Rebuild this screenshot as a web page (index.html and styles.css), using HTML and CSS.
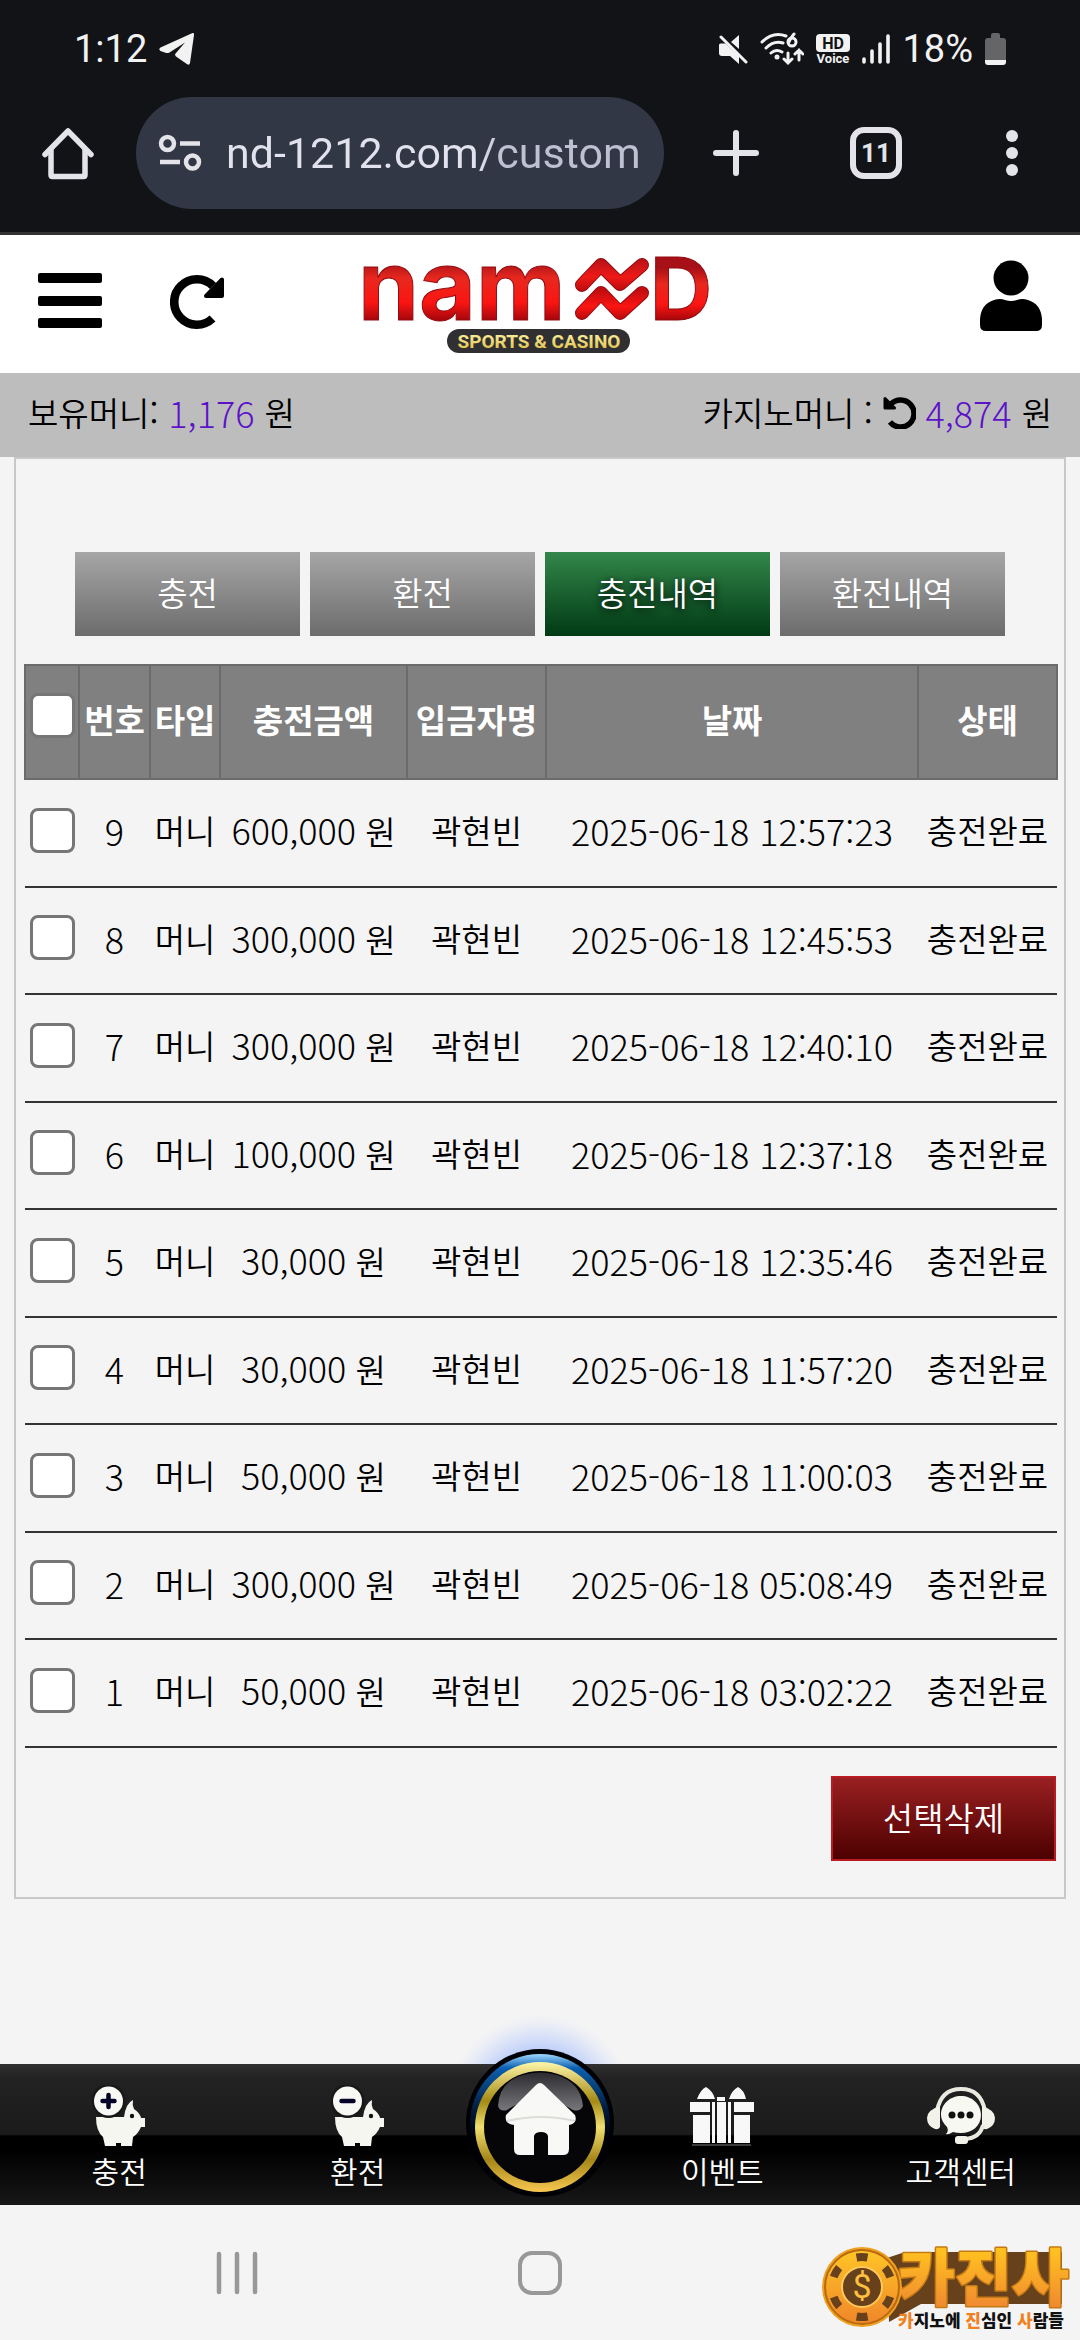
FILE: index.html
```html
<!DOCTYPE html>
<html lang="ko">
<head>
  <meta charset="UTF-8">
  <title>충전내역</title>
  <meta name="viewport" content="width=device-width, initial-scale=1.0">
  <link rel="stylesheet" href="styles.css">
</head>
<body>
  <div class="browser">
    <div class="status-bar">
      <span class="clock">1:12</span>
      <svg width="36" height="34" viewBox="0 0 36 34" fill="#f2f2f2"><path d="M1.500 15.500 33 1.200q2.500-.8 2 1.800L31 31q-.6 2.500-2.800 1.200L17 24.500q-1.800-1.500-.2-3.200L26 10.500 10.500 20.500q-2 1-4 .3L1.500 19q-2.500-1.700 0-3.500z"/></svg>
      <div class="status-icons">
        <svg width="30" height="30" viewBox="0 0 30 30" fill="#f2f2f2"><path d="M13 8 21 1v14zM1 11q0-1.500 1.500-1.500h5L21 22v8l-9-8H4q-3 0-3-3z"/><path d="M3 3l25 25" stroke="#f2f2f2" stroke-width="3" stroke-linecap="round"/></svg>
        <svg width="44" height="34" viewBox="0 0 44 34" fill="none" stroke="#f2f2f2" stroke-width="3" stroke-linecap="round"><path d="M2 10Q13-1 26 4M6 16q8-8 17-5M11 21q5-4.500 11-1"/><circle cx="17" cy="25" r="1" fill="#f2f2f2"/><path d="M34 2q-4 5-5 8"/><circle cx="32" cy="10" r="4"/><path d="M28 21v10m-4-4 4 4 4-4M39 28V18m-4 4 4-4 4 4"/></svg>
        <svg width="34" height="32" viewBox="0 0 34 32" fill="#f2f2f2"><rect x="0" y="1" width="34" height="18" rx="4"/><text class="hd" x="17" y="16" text-anchor="middle">HD</text><text class="voice" x="17" y="30" text-anchor="middle">Voice</text></svg>
        <svg width="28" height="30" viewBox="0 0 28 30" stroke="#f2f2f2" stroke-width="3.600" stroke-linecap="round"><path d="M2 25v3M10 17v11M18 10v18M26 2v26"/></svg>
        <span class="clock">18%</span>
        <svg width="21" height="32" viewBox="0 0 21 32"><path d="M6 5V2q0-2 2-2h5q2 0 2 2v3h3q3 0 3 3v19H0V8q0-3 3-3z" fill="#656567"/><path d="M0 27h21v2q0 3-3 3H3q-3 0-3-3z" fill="#f2f2f2"/></svg>
      </div>
    </div>
    <div class="address-row">
      <button class="tool tool-home" aria-label="홈">
        <svg width="52" height="54" viewBox="0 0 52 54" fill="none" stroke="#e4e3ea" stroke-width="5.500" stroke-linejoin="round" stroke-linecap="round"><path d="M3 28.500 26 5l23 23.500"/><path d="M9 24v25q0 1.500 1.500 1.500h31q1.500 0 1.500-1.500V24"/></svg>
      </button>
      <label class="url-box">
        <svg width="44" height="38" viewBox="0 0 44 38" fill="none" stroke="#e4e3ea" stroke-width="4.500"><circle cx="9.500" cy="9.500" r="6.500"/><path d="M22 9.500h20M2 28h20"/><circle cx="34.500" cy="28" r="6.500"/></svg>
        <input class="url" type="text" value="nd-1212.com/custom" aria-label="주소">
      </label>
      <button class="tool tool-new" aria-label="새 탭">
        <svg width="46" height="48" viewBox="0 0 46 48" stroke="#e4e3ea" stroke-width="6" stroke-linecap="round"><path d="M23 4v40M3 24h40"/></svg>
      </button>
      <button class="tool" aria-label="탭 11개"><span class="tab-count">11</span></button>
      <button class="tool" aria-label="메뉴">
        <svg width="12" height="48" viewBox="0 0 12 48" fill="#e4e3ea"><circle cx="6" cy="7" r="6"/><circle cx="6" cy="24" r="6"/><circle cx="6" cy="41" r="6"/></svg>
      </button>
    </div>
  </div>

  <header class="site-header">
    <div class="header-left">
      <button class="icon-btn" aria-label="전체 메뉴">
        <svg width="64" height="64" viewBox="0 0 64 64"><rect x="0" y="1" width="64" height="10" rx="2"/><rect x="0" y="24" width="64" height="10" rx="2"/><rect x="0" y="46" width="64" height="10" rx="2"/></svg>
      </button>
      <button class="icon-btn" aria-label="새로고침">
        <svg width="56" height="58" viewBox="0 0 56 58"><path d="M43 11A22.700 22.700 0 1 0 42.500 43.500" fill="none" stroke="#000" stroke-width="8.600"/><path d="M52 4.500V21H36z" stroke="#000" stroke-width="4" stroke-linejoin="round"/></svg>
      </button>
    </div>
    <a class="logo" href="#" aria-label="NAMND">
      <svg width="354" height="138" viewBox="0 -22 354 138">
        <defs>
          <linearGradient id="red" x1="0" y1="0" x2="0" y2="1">
            <stop offset=".3" stop-color="#a81018"/>
            <stop offset=".45" stop-color="#e8281e"/>
            <stop offset=".65" stop-color="#fb1512"/>
            <stop offset=".8" stop-color="#a5060c"/>
          </linearGradient>
          <linearGradient id="zig" gradientUnits="userSpaceOnUse" x1="0" y1="0" x2="0" y2="66">
            <stop offset="0" stop-color="#b01018"/>
            <stop offset=".3" stop-color="#ee1a16"/>
            <stop offset=".5" stop-color="#c00c10"/>
            <stop offset=".75" stop-color="#fb1512"/>
            <stop offset="1" stop-color="#a5060c"/>
          </linearGradient>
          <linearGradient id="gold" x1="0" y1="0" x2="0" y2="1">
            <stop offset="0" stop-color="#fff8b0"/>
            <stop offset="1" stop-color="#dcb93c"/>
          </linearGradient>
        </defs>
        <text class="logo-small" x="-5" y="63">nam</text>
        <g fill="none" stroke-linejoin="round" stroke-linecap="round">
          <g stroke="#8f0b10" stroke-width="14"><path d="M219 28 238 8l19 19 22-19"/><path d="M219 56l19-20 19 20 22-20"/></g>
          <g stroke="url(#zig)" stroke-width="12"><path d="M219 28 238 8l19 19 22-19"/><path d="M219 56l19-20 19 20 22-20"/></g>
        </g>
        <text class="logo-cap" x="287" y="63">D</text>
        <rect x="84" y="72" width="183" height="24" rx="12" fill="#303033"/>
        <text class="logo-sub" x="176" y="91" text-anchor="middle">SPORTS &amp; CASINO</text>
      </svg>
    </a>
    <button class="icon-btn icon-user" aria-label="내 정보">
      <svg width="62" height="88" viewBox="0 0 62 88"><circle cx="31" cy="18" r="17.500"/><path d="M0 59Q1 44 14 40q6-2 11 0 6 2 12 0 5-2 11 0Q61 44 62 59v6q0 6-6 6H6q-6 0-6-6z"/></svg>
    </button>
  </header>

  <div class="balance">
    <div class="balance-item"><span>보유머니:</span> <b class="num">1,176</b> <span>원</span></div>
    <div class="balance-item"><span>카지노머니 :</span>
      <button class="refresh" aria-label="카지노머니 새로고침"><svg width="33" height="34" viewBox="0 0 33 34"><path d="M8 9a13.500 13.500 0 1 1-1 18" fill="none" stroke="#000" stroke-width="5.600"/><path d="M2 3.500V13h9.500z" stroke="#000" stroke-width="3" stroke-linejoin="round"/></svg></button>
      <b class="num">4,874</b> <span>원</span></div>
  </div>

  <main>
    <section class="panel">
      <nav class="tabs">
        <a class="tab" href="#">충전</a>
        <a class="tab" href="#">환전</a>
        <a class="tab active" href="#">충전내역</a>
        <a class="tab" href="#">환전내역</a>
      </nav>
      <table class="history">
        <colgroup>
          <col class="c-check"><col class="c-no"><col class="c-type"><col class="c-amount"><col class="c-name"><col class="c-date"><col class="c-state">
        </colgroup>
        <thead>
          <tr>
            <th><input type="checkbox" aria-label="전체 선택"></th>
            <th>번호</th>
            <th>타입</th>
            <th>충전금액</th>
            <th>입금자명</th>
            <th>날짜</th>
            <th>상태</th>
          </tr>
        </thead>
        <tbody>
          <tr><td><input type="checkbox" aria-label="9번 선택"></td><td class="num">9</td><td>머니</td><td><span class="num">600,000</span> 원</td><td>곽현빈</td><td class="num">2025-06-18 12:57:23</td><td>충전완료</td></tr>
          <tr><td><input type="checkbox" aria-label="8번 선택"></td><td class="num">8</td><td>머니</td><td><span class="num">300,000</span> 원</td><td>곽현빈</td><td class="num">2025-06-18 12:45:53</td><td>충전완료</td></tr>
          <tr><td><input type="checkbox" aria-label="7번 선택"></td><td class="num">7</td><td>머니</td><td><span class="num">300,000</span> 원</td><td>곽현빈</td><td class="num">2025-06-18 12:40:10</td><td>충전완료</td></tr>
          <tr><td><input type="checkbox" aria-label="6번 선택"></td><td class="num">6</td><td>머니</td><td><span class="num">100,000</span> 원</td><td>곽현빈</td><td class="num">2025-06-18 12:37:18</td><td>충전완료</td></tr>
          <tr><td><input type="checkbox" aria-label="5번 선택"></td><td class="num">5</td><td>머니</td><td><span class="num">30,000</span> 원</td><td>곽현빈</td><td class="num">2025-06-18 12:35:46</td><td>충전완료</td></tr>
          <tr><td><input type="checkbox" aria-label="4번 선택"></td><td class="num">4</td><td>머니</td><td><span class="num">30,000</span> 원</td><td>곽현빈</td><td class="num">2025-06-18 11:57:20</td><td>충전완료</td></tr>
          <tr><td><input type="checkbox" aria-label="3번 선택"></td><td class="num">3</td><td>머니</td><td><span class="num">50,000</span> 원</td><td>곽현빈</td><td class="num">2025-06-18 11:00:03</td><td>충전완료</td></tr>
          <tr><td><input type="checkbox" aria-label="2번 선택"></td><td class="num">2</td><td>머니</td><td><span class="num">300,000</span> 원</td><td>곽현빈</td><td class="num">2025-06-18 05:08:49</td><td>충전완료</td></tr>
          <tr><td><input type="checkbox" aria-label="1번 선택"></td><td class="num">1</td><td>머니</td><td><span class="num">50,000</span> 원</td><td>곽현빈</td><td class="num">2025-06-18 03:02:22</td><td>충전완료</td></tr>
        </tbody>
      </table>
      <div class="actions"><button class="delete">선택삭제</button></div>
    </section>
  </main>

  <nav class="bottom-nav">
    <a class="nav-item" href="#">
      <svg width="54" height="62" viewBox="0 0 54 62"><path d="M4 32h28Q34 18 41 15q-1 5 1 9 6 4 7 9h4v9h-4q-3 7-8 10l-1 9H29v-3h-5v3H13l-2-9Q4 46 4 32z" fill="#f6f6f0"/><circle cx="40" cy="31" r="2.200" fill="#111"/><circle cx="16.500" cy="16" r="17" fill="#181818"/><circle cx="16.500" cy="16" r="14.500" fill="#f8f8f4"/><path d="M16.500 10v12M10.500 16h12" stroke="#05052a" stroke-width="4.500" stroke-linecap="round"/></svg>
      충전
    </a>
    <a class="nav-item" href="#">
      <svg width="54" height="62" viewBox="0 0 54 62"><path d="M4 32h28Q34 18 41 15q-1 5 1 9 6 4 7 9h4v9h-4q-3 7-8 10l-1 9H29v-3h-5v3H13l-2-9Q4 46 4 32z" fill="#f6f6f0"/><circle cx="40" cy="31" r="2.200" fill="#111"/><circle cx="16.500" cy="16" r="17" fill="#181818"/><circle cx="16.500" cy="16" r="14.500" fill="#f8f8f4"/><path d="M10.500 16h12" stroke="#05052a" stroke-width="4.500" stroke-linecap="round"/></svg>
      환전
    </a>
    <a class="nav-home" href="#" aria-label="홈">
      <svg class="home-orb" width="240" height="200" viewBox="-20 -20 240 200">
        <defs>
          <radialGradient id="glow"><stop offset=".5" stop-color="#7fa4ff" stop-opacity=".7"/><stop offset=".8" stop-color="#a8c0ff" stop-opacity=".3"/><stop offset="1" stop-color="#c8d8ff" stop-opacity="0"/></radialGradient>
          <linearGradient id="blue" x1="0" y1="0" x2="0" y2="1"><stop offset="0" stop-color="#9fd8ff"/><stop offset=".1" stop-color="#0c60b0"/><stop offset=".4" stop-color="#021a3c"/><stop offset=".6" stop-color="#000208"/></linearGradient>
          <linearGradient id="ring" x1="0" y1="0" x2="0" y2="1"><stop offset="0" stop-color="#fff6a8"/><stop offset=".3" stop-color="#a58a14"/><stop offset=".5" stop-color="#f0e070"/><stop offset=".75" stop-color="#a58618"/><stop offset="1" stop-color="#f8c850"/></linearGradient>
          <linearGradient id="shine" x1="0" y1="0" x2="0" y2="1"><stop offset="0" stop-color="#2c2c30"/><stop offset="1" stop-color="#77777c"/></linearGradient>
          <clipPath id="above"><path d="M-20-20h240v54H-20z"/></clipPath>
        </defs>
        <circle cx="100" cy="78" r="94" fill="url(#glow)" clip-path="url(#above)"/>
        <circle cx="100" cy="93" r="74" fill="#000104"/>
        <circle cx="100" cy="94" r="70" fill="url(#blue)"/>
        <circle cx="100" cy="97" r="65" fill="url(#ring)"/>
        <circle cx="100" cy="97" r="56" fill="#060608"/>
        <path d="M58 76Q59 52 83 45q17-5 34 0 24 8 26 31-3 6-10 4-33-22-66 0-7 2-9-4z" fill="url(#shine)"/>
        <path d="M96 55q4-4 8 0l31 30q3 8-6 10v24q0 6-6 6h-15v-19q-1-4-7-4t-7 4v19H80q-6 0-6-6V95q-10-1-8-10z" fill="#f8f8f6"/>
        <path d="M67 91q34-8 68 0" stroke="#dcdcd8" stroke-width="2" fill="none"/>
      </svg>
    </a>
    <a class="nav-item" href="#">
      <svg width="66" height="62" viewBox="0 0 66 62" fill="#f8f8f8"><path d="M8 14Q12 4 17 2q7 4 9 12zM40 14q3-9 9-12 6 3 8 12zM28 12h8v4h-8zM1 17h20v10H1zM45 17h20v10H45zM4 30h17v28H4zM45 30h16v28H45zM28 17h9v41h-9zM23 17h3v41h-3zM39 17h3v41h-3z"/><path d="M3 60h59" stroke="#777" stroke-width="1"/></svg>
      이벤트
    </a>
    <a class="nav-item" href="#">
      <svg width="70" height="62" viewBox="0 0 70 62"><path d="M11 26Q15 4 35 4t24 22" fill="none" stroke="#e9e9e0" stroke-width="4"/><path d="M14 21Q1 25 1 33t8 11q6 1 5-5zM56 21q13 4 13 12t-8 11q-6 1-5-5z" fill="#f2f2ea"/><path d="M57 40q-3 13-18 14" fill="none" stroke="#e9e9e0" stroke-width="4"/><rect x="29" y="51" width="13" height="8" rx="3" fill="#f2f2ea"/><path d="M35 11c11 0 20 8 20 19s-9 18-20 18q-5 0-8-1-5 3-7 2 3-3 1-7-6-6-6-12c0-11 9-19 20-19z" fill="#f8f8f2"/><g fill="#111"><circle cx="26" cy="30" r="3.500"/><circle cx="35" cy="30" r="3.500"/><circle cx="44" cy="30" r="3.500"/></g></svg>
      고객센터
    </a>
  </nav>

  <div class="system-nav">
    <button class="sys-btn" aria-label="최근 앱"><svg width="42" height="44" viewBox="0 0 42 44" stroke="#989898" stroke-width="4.500" stroke-linecap="round"><path d="M3 3v38M21 3v38M39 3v38"/></svg></button>
    <button class="sys-btn" aria-label="홈 화면"><svg width="46" height="46" viewBox="0 0 46 46" fill="none" stroke="#989898" stroke-width="4"><rect x="3" y="3" width="40" height="40" rx="12"/></svg></button>
    <span></span>
    <svg class="brand" width="250" height="100" viewBox="0 -4 250 100">
      <defs>
        <linearGradient id="amber" x1="0" y1="0" x2="0" y2="1"><stop offset="0" stop-color="#ffc526"/><stop offset="1" stop-color="#f0862a"/></linearGradient>
        <linearGradient id="amber-text" gradientUnits="userSpaceOnUse" x1="0" y1="8" x2="0" y2="62"><stop offset="0" stop-color="#ffc020"/><stop offset="1" stop-color="#f08a30"/></linearGradient>
      </defs>
      <path d="M66 14 84 8h157v52H100L68 78z" fill="#67401c"/>
      <text class="brand-main" x="77" y="57">카진사</text>
      <circle cx="41" cy="43" r="40" fill="#f0a020"/>
      <circle cx="41" cy="43" r="37" fill="url(#amber)" stroke="#b86a10" stroke-width="2"/>
      <circle cx="41" cy="43" r="30" fill="none" stroke="#67401c" stroke-width="8" stroke-dasharray="11 20.416" stroke-dashoffset="-10"/>
      <circle cx="41" cy="43" r="20" fill="#67401c" stroke="#ffc95a" stroke-width="2"/>
      <text class="brand-coin" x="41" y="54" text-anchor="middle">$</text>
      <text class="brand-tag" x="77" y="83"><tspan class="hot">카</tspan>지노에 <tspan class="hot">진</tspan>심인 <tspan class="hot">사</tspan>람들</text>
    </svg>
  </div>
</body>
</html>
```
FILE: styles.css
```css
* { box-sizing: border-box; }
body { margin: 0; min-height: 100vh; display: flex; flex-direction: column; background: #f4f4f4; color: #000; font-family: "Noto Sans CJK KR", "Noto Sans KR", sans-serif; font-size: 33px; font-weight: 350; line-height: 48px; }
a { color: inherit; text-decoration: none; }
button { margin: 0; padding: 0; border: 0; background: none; font: inherit; color: inherit; }
svg { display: block; flex: none; }

/* browser chrome */
.browser { background: #121317; border-bottom: 3px solid #333335; padding-bottom: 23px; font-family: Roboto, sans-serif; font-weight: 400; }
.status-bar { height: 97px; padding: 0 74px; display: flex; align-items: center; gap: 12px; }
.status-icons { margin-left: auto; display: flex; align-items: center; gap: 12px; }
.clock { font-size: 38px; color: #f2f2f2; }
.hd { font: 700 16px Roboto, sans-serif; fill: #121317; }
.voice { font: 700 13px Roboto, sans-serif; }
.address-row { display: flex; align-items: center; height: 112px; }
.tool { width: 136px; display: flex; align-items: center; justify-content: center; }
.tool-new { width: 144px; }
.url-box { flex: 1; height: 112px; min-width: 0; padding: 0 20px 0 22px; display: flex; align-items: center; gap: 24px; border-radius: 56px; background: #323745; }
.url { flex: 1; min-width: 0; padding: 0; border: 0; outline: 0; font: 43px Roboto, sans-serif; color: transparent; background: linear-gradient(90deg, #e1e2ee 60%, #bec1d2 66%); -webkit-background-clip: text; background-clip: text; }
.tab-count { width: 52px; height: 52px; border: 6px solid #e4e3ea; border-radius: 14px; color: #e4e3ea; font-size: 26px; font-weight: 700; line-height: 40px; text-align: center; }

/* site header */
.site-header { height: 138px; padding: 0 38px; display: grid; grid-template-columns: 1fr auto 1fr; align-items: center; background: #fff; }
.header-left { display: flex; align-items: center; gap: 68px; }
.icon-user { justify-self: end; }
.logo-small { font: 700 98px Inter, sans-serif; fill: url(#red); stroke: #8f0b10; stroke-width: 1px; }
.logo-cap { font: 700 86px Inter, sans-serif; fill: url(#red); stroke: #8f0b10; stroke-width: 1px; }
.logo-sub { font: 700 19px Roboto, sans-serif; fill: url(#gold); }

.balance { height: 84px; padding: 0 28px 6px; display: flex; align-items: center; justify-content: space-between; background: #bdbdbd; }
.balance-item { display: flex; align-items: center; gap: 10px; }
.balance .num { color: #5c12c8; }
.num { font-size: 36px; font-weight: 300; }

/* history */
main { flex: 1; padding: 0 14px; }
.panel { padding: 93px 8px 36px; border: 2px solid #c8c8c8; }
.tabs { display: flex; gap: 10px; padding: 0 51px; }
.tab { flex: 1; height: 84px; line-height: 80px; text-align: center; color: #fff; background: linear-gradient(#a6a6a6, #6c6c6c); }
.tab.active { background: linear-gradient(#33874a, #003a14); text-shadow: 0 2px 8px #000; }
.history { width: 100%; margin-top: 28px; table-layout: fixed; border-collapse: collapse; }
.c-check { width: 54px; }
.c-no { width: 71px; }
.c-type { width: 70px; }
.c-amount { width: 187px; }
.c-name { width: 139px; }
.c-date { width: 372px; }
.c-state { width: 139px; }
.history th { height: 114px; padding: 0 0 6px; border: 2px solid #6b6b6b; background: #808080; color: #fff; font-weight: 700; white-space: nowrap; }
.history td { height: 107px; padding: 0 0 6px; border-bottom: 2px solid #333; text-align: center; white-space: nowrap; }
.history tbody tr:nth-child(odd) td { height: 108px; }
.history input { appearance: none; display: block; width: 45px; height: 45px; margin: 0 auto; border: 3px solid #767676; border-radius: 8px; background: #fff; }
.history th input { margin-bottom: 8px; }
.actions { margin-top: 28px; display: flex; justify-content: flex-end; }
.delete { width: 225px; height: 85px; padding-bottom: 4px; border: 2px solid #b81c22; background: linear-gradient(#992022, #4d0000); color: #fff; }

/* bottom menu */
.bottom-nav { height: 141px; display: grid; grid-template-columns: 17fr 17fr 9fr 17fr 17fr; background: linear-gradient(#303030, #222 10%, #1b1b1b 50%, #000 51%, #000 60%, #171717); color: #fff; font-size: 30px; }
.nav-item { padding-top: 21px; display: flex; flex-direction: column; align-items: center; line-height: 46px; }
.nav-home { position: relative; }
.home-orb { position: absolute; left: 50%; bottom: -5px; margin-left: -120px; }

.system-nav { position: relative; height: 135px; padding: 0 86px; display: grid; grid-template-columns: 1fr 1fr 1fr; align-items: center; }
.sys-btn { display: flex; justify-content: center; }
.brand { position: absolute; right: 9px; bottom: 0; }
.brand-main { font: 900 62px "Noto Sans CJK KR", sans-serif; fill: url(#amber-text); stroke: #c47a14; stroke-width: 3px; stroke-linejoin: round; paint-order: stroke; }
.brand-coin { font: 400 34px Roboto, sans-serif; fill: #ffc040; }
.brand-tag { font: 900 17px "Noto Sans CJK KR", sans-serif; fill: #111; }
.hot { fill: #f08020; }
```
